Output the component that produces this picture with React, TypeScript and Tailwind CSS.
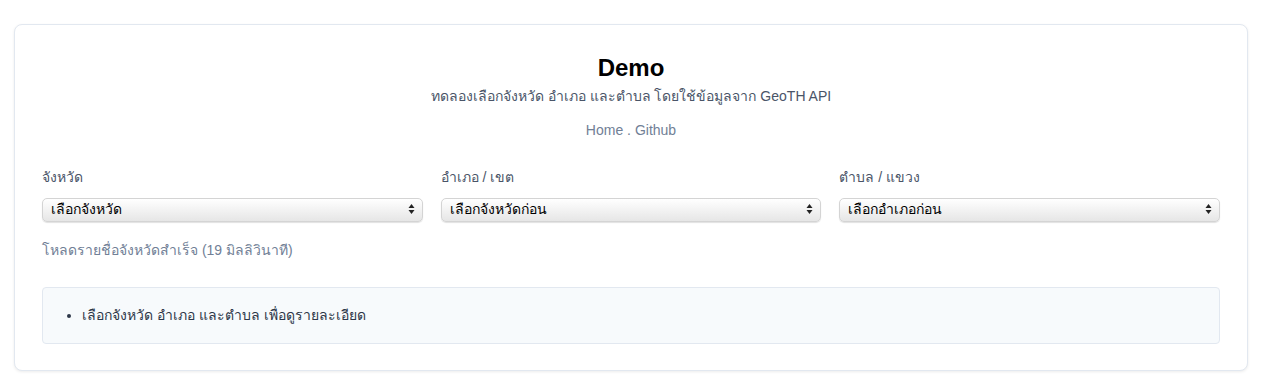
import React, { useState } from 'react';

const font = { fontFamily: '"Liberation Sans", "Noto Sans", "DejaVu Sans", sans-serif' };

type SelectProps = {
  label: string;
  placeholder: string;
  disabled?: boolean;
};

const Field: React.FC<SelectProps> = ({ label, placeholder, disabled }) => {
  const [value, setValue] = useState('');
  return (
    <div className="flex flex-col">
      <label className="text-[14px] leading-5 text-[#4a5568] mb-[10px]">{label}</label>
      <div className="relative">
        <select
          value={value}
          disabled={disabled}
          onChange={(e) => setValue(e.target.value)}
          className="w-full h-[24px] appearance-none rounded-[5px] border border-[#d4d4d4] bg-gradient-to-b from-white to-[#e6e6e6] pl-2 pr-6 text-[14px] font-medium text-black shadow-[0_1px_1px_rgba(0,0,0,0.12)] outline-none"
          style={font}
        >
          <option value="">{placeholder}</option>
        </select>
        {/* up/down arrows */}
        <svg
          className="absolute right-[8px] top-1/2 -translate-y-1/2 pointer-events-none"
          width="7"
          height="11"
          viewBox="0 0 7 11"
        >
          <path d="M3.5 0.5 L6.5 4.5 L0.5 4.5 Z" fill="#222" />
          <path d="M3.5 10.5 L6.5 6.5 L0.5 6.5 Z" fill="#222" />
        </svg>
      </div>
    </div>
  );
};

export default function App() {
  return (
    <div className="min-h-screen w-full bg-white pl-[14px] pr-[32px] pt-6" style={font}>
      <div className="rounded-lg border border-[#e2e8f0] bg-white px-[27px] pt-[27px] pb-[26px] shadow-[0_1px_3px_rgba(0,0,0,0.08)]">
        <div className="flex flex-col items-center text-center">
          <h1 className="text-[24px] leading-8 font-bold text-black">Demo</h1>
          <p className="mt-[2px] text-[14px] leading-5 text-[#4a5568]">
            ทดลองเลือกจังหวัด อำเภอ และตำบล โดยใช้ข้อมูลจาก GeoTH API
          </p>
          <p className="mt-[14px] text-[14px] leading-5 text-[#718096]">
            <a href="#" className="hover:underline">Home</a> . <a href="#" className="hover:underline">Github</a>
          </p>
        </div>

        <div className="mt-[27px] grid grid-cols-3 gap-[18px]">
          <Field label="จังหวัด" placeholder="เลือกจังหวัด" />
          <Field label="อำเภอ / เขต" placeholder="เลือกจังหวัดก่อน" disabled />
          <Field label="ตำบล / แขวง" placeholder="เลือกอำเภอก่อน" disabled />
        </div>

        <p className="mt-[18px] text-[14px] leading-5 text-[#718096]">
          โหลดรายชื่อจังหวัดสำเร็จ (19 มิลลิวินาที)
        </p>

        <div className="mt-[27px] h-[57px] rounded border border-[#e2e8f0] bg-[#f7fafc] px-[21px] flex items-center">
          <ul className="list-disc pl-[18px] text-[14px] leading-5 text-[#2d3748]">
            <li>เลือกจังหวัด อำเภอ และตำบล เพื่อดูรายละเอียด</li>
          </ul>
        </div>
      </div>
    </div>
  );
}
